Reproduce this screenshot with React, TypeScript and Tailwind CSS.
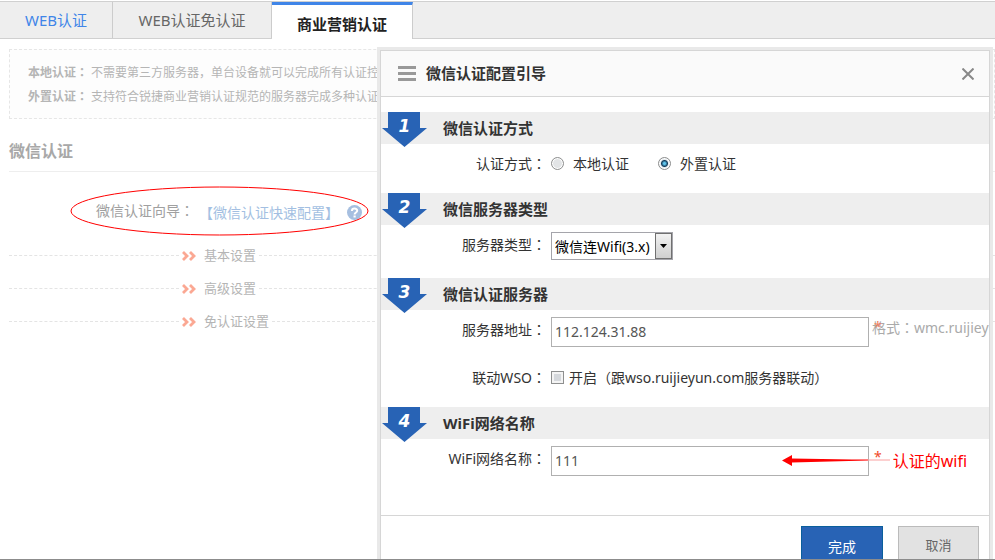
import type { ReactNode } from "react";

/* Full-width colon drawn in the middle of its cell */
function Colon() {
  return <span className="font-['Noto_Sans_CJK_TC',sans-serif] leading-none">：</span>;
}

function Tab({ children, className }: { children: ReactNode; className: string }) {
  return (
    <button type="button" role="tab" className={`text-[15px] ${className}`}>
      {children}
    </button>
  );
}

function Chevrons() {
  return (
    <svg width="14" height="10" viewBox="0 0 14 10" fill="none" stroke="#fba893" strokeWidth="2.8" aria-hidden="true">
      <path d="M1 1l4 4L1 9M8 1l4 4-4 4" />
    </svg>
  );
}

function FoldRow({ title }: { title: string }) {
  return (
    <div className="flex h-[33px] items-center">
      <span className="w-[170px] border-t border-dashed border-[#e4e4e4]" />
      <button type="button" className="flex items-center gap-2 px-[3px] text-[13px] text-[#b5b5b5]">
        <Chevrons />
        {title}
      </button>
      <span className="grow border-t border-dashed border-[#e4e4e4]" />
    </div>
  );
}

function Section({ step, title, children }: { step: number; title: string; children: ReactNode }) {
  return (
    <section>
      <div className="relative flex h-8 items-center bg-[#eee] pl-[62px]">
        <svg className="absolute top-0 left-px" width="45" height="35" viewBox="0 0 45 35" aria-hidden="true">
          <path d="M6 0H38V16H45L22.500 35L0 16H6Z" fill="#2863b5" />
        </svg>
        <span className="absolute top-0 left-px w-[45px] text-center font-['DejaVu_Sans',sans-serif] text-[17px] leading-7 font-bold text-white italic">
          {step}
        </span>
        <h3 className="text-[15px] font-bold text-[#333]">{title}</h3>
      </div>
      <div className="flex flex-col gap-[18px] pt-[7px] pb-[18px]">{children}</div>
    </section>
  );
}

function Field({ label, htmlFor, children }: { label: string; htmlFor?: string; children: ReactNode }) {
  return (
    <div className="flex items-start">
      <label htmlFor={htmlFor} className="h-6 w-[170px] shrink-0 pr-[5px] text-right leading-[26px]">
        {label}
        <Colon />
      </label>
      {children}
    </div>
  );
}

const radio =
  "size-[13px] appearance-none rounded-full border border-[#8e8f8f] bg-[#e2e4e6] shadow-[inset_0_0_0_1px_#fff] checked:bg-[radial-gradient(circle,#5fc3ea_0_1px,#123c5c_3px,#e4eaee_4px)]";

const textBox = "h-[30px] w-[318px] shrink-0 border border-[#b0b0b0] bg-white px-[3px] pb-[2px] text-[14px] text-[#555]";

function Dialog() {
  return (
    <div
      role="dialog"
      aria-label="微信认证配置引导"
      className="absolute top-[47px] right-[2px] left-[377px] border-[3px] border-[#e9e9e9]"
    >
      <div className="overflow-hidden border border-[#d6d6d6] bg-white text-[14px] text-[#333]">
        <header className="flex h-[46px] items-center border-b border-[#d6d6d6] bg-[#fafafa] pr-[15px] pl-[17px]">
          <span className="flex w-[18px] flex-col gap-[3px]">
            <span className="h-[3px] bg-[#999]" />
            <span className="h-[3px] bg-[#999]" />
            <span className="h-[3px] bg-[#999]" />
          </span>
          <h2 className="ml-2.5 grow text-[15px] font-bold">微信认证配置引导</h2>
          <button type="button" aria-label="关闭">
            <svg width="12" height="12" viewBox="0 0 12 12" stroke="#888" strokeWidth="2">
              <path d="M.5.5l11 11M11.500.5l-11 11" />
            </svg>
          </button>
        </header>

        <div className="pt-[15px]">
          <Section step={1} title="微信认证方式">
            <Field label="认证方式">
              <div className="flex h-6 items-center">
                <label className="flex w-[107px] items-center gap-[9px]">
                  <input type="radio" name="mode" className={radio} />
                  本地认证
                </label>
                <label className="flex items-center gap-[9px]">
                  <input type="radio" name="mode" defaultChecked className={radio} />
                  外置认证
                </label>
              </div>
            </Field>
          </Section>

          <Section step={2} title="微信服务器类型">
            <Field label="服务器类型" htmlFor="type">
              <div className="relative">
                <select
                  id="type"
                  className="block h-7 w-[122px] appearance-none border border-[#a5a5ab] bg-white pl-[3px] text-[14px] text-black"
                >
                  <option>微信连Wifi(3.x)</option>
                </select>
                <span className="pointer-events-none absolute top-px right-px bottom-px flex w-[17px] items-center justify-center border border-[#707070] bg-linear-to-b from-[#f2f2f2] to-[#cfcfcf]">
                  <svg width="7" height="4" viewBox="0 0 7 4" aria-hidden="true">
                    <path d="M0 0H7L3.500 4Z" fill="#000" />
                  </svg>
                </span>
              </div>
            </Field>
          </Section>

          <Section step={3} title="微信认证服务器">
            <Field label="服务器地址" htmlFor="host">
              <input id="host" type="text" defaultValue="112.124.31.88" className={textBox} />
              <div className="relative ml-[3px] leading-[22px] whitespace-nowrap text-[#aaa]">
                格式
                <Colon />
                wmc.ruijieyun.com
                <span className="absolute top-0 left-[2px] leading-5 text-[#f08060]">*</span>
              </div>
            </Field>
            <Field label="联动WSO">
              <label className="flex h-6 items-center gap-[5px]">
                <input
                  type="checkbox"
                  className="size-[13px] appearance-none border border-[#8e8f8f] bg-[#d5d8dc] shadow-[inset_0_0_0_2px_#f4f4f4]"
                />
                <span>开启（跟wso.ruijieyun.com服务器联动）</span>
              </label>
            </Field>
          </Section>

          <Section step={4} title="WiFi网络名称">
            <Field label="WiFi网络名称" htmlFor="ssid">
              <input id="ssid" type="text" defaultValue="111" className={textBox} />
              <span className="ml-[5px] leading-[22px] text-[#f04a28]">*</span>
              <div className="relative ml-[11px] text-[16px] leading-[30px] whitespace-nowrap text-[#f00]">
                认证的wifi
                <svg
                  className="absolute top-[9px] right-full mr-[3px]"
                  width="108"
                  height="11"
                  viewBox="0 0 108 11"
                  aria-hidden="true"
                >
                  <path d="M0 5.500L10 0V3.500L70 4.500H86V5.500L10 7.500V11Z" fill="#f00" />
                  <path d="M86 4.500H108V5.500H86Z" fill="#f9a0a0" />
                </svg>
              </div>
            </Field>
          </Section>
        </div>

        <footer className="mt-[21px] flex justify-end gap-[15px] border-t border-[#d6d6d6] px-[10px] py-[10px]">
          <button type="button" className="h-10 w-[82px] border border-[#0a5f9c] bg-[#2863b5] text-white">
            完成
          </button>
          <button type="button" className="h-10 w-[81px] border border-[#bbb] bg-[#e2e2e2] text-[13px] text-[#666]">
            取消
          </button>
        </footer>
      </div>
    </div>
  );
}

export default function App() {
  return (
    <div className="relative h-screen overflow-hidden bg-white pt-px font-['Noto_Sans','Noto_Sans_CJK_SC',sans-serif]">
      <nav role="tablist" className="flex h-[38px] border-t border-b border-[#d0d0d0] bg-[#eee]">
        <Tab className="w-[113px] border-r border-[#ccc] pt-px text-[#3f85e8]">WEB认证</Tab>
        <Tab className="w-[159px] border-r border-[#ccc] pt-px text-[#666]">WEB认证免认证</Tab>
        <Tab className="-mb-px w-[141px] border-t-3 border-r border-t-[#3f85e8] border-r-[#ccc] bg-white pt-1 font-bold text-[#222]">
          商业营销认证
        </Tab>
      </nav>

      <main className="pl-[9px]">
        <div className="mt-[10px] h-[70px] overflow-hidden border border-dashed border-[#e6e6e6] bg-[#fdfdfd] py-[11px] pl-[18px] text-[12px] leading-6 whitespace-nowrap text-[#b5b5b5]">
          <p className="h-6">
            <b className="mr-[3px]">
              本地认证
              <Colon />
            </b>
            不需要第三方服务器，单台设备就可以完成所有认证控制
          </p>
          <p className="h-6">
            <b className="mr-[3px]">
              外置认证
              <Colon />
            </b>
            支持符合锐捷商业营销认证规范的服务器完成多种认证方式
          </p>
        </div>

        <h1 className="mt-3 h-[41px] border-b border-[#eee] text-[16px] leading-10 font-bold text-[#a8a8a8]">微信认证</h1>

        <div className="relative mt-[14px] flex h-[52px] items-center pl-[87px] text-[14px] text-[#a0a0a0]">
          <span className="pb-1">
            微信认证向导
            <Colon />
          </span>
          <a href="#wizard" className="ml-[5px] pt-px text-[#a3bfe2]">
            【微信认证快速配置】
          </a>
          <svg className="ml-2" width="15" height="15" viewBox="0 0 15 15" aria-hidden="true">
            <circle cx="7.500" cy="7.500" r="7.500" fill="#a6bfe0" />
            <path
              d="M4.900 5.900C4.900 2.800 10.200 2.900 10.200 5.700C10.200 7.500 7.600 7.500 7.600 9.500"
              fill="none"
              stroke="#fff"
              strokeWidth="2"
            />
            <path d="M6.500 10.500H8.700V12.500H6.500Z" fill="#fff" />
          </svg>
          <svg className="absolute top-0 left-[61px]" width="299" height="50" viewBox="0 0 299 50" aria-hidden="true">
            <ellipse cx="149.500" cy="25" rx="148.500" ry="24" fill="none" stroke="#f00" strokeWidth="1" />
          </svg>
        </div>

        <div className="pt-[1px]">
          <FoldRow title="基本设置" />
          <FoldRow title="高级设置" />
          <FoldRow title="免认证设置" />
        </div>
      </main>

      <Dialog />
      <div className="absolute inset-x-0 bottom-0 h-px bg-[#8c8c8c]" />
    </div>
  );
}
